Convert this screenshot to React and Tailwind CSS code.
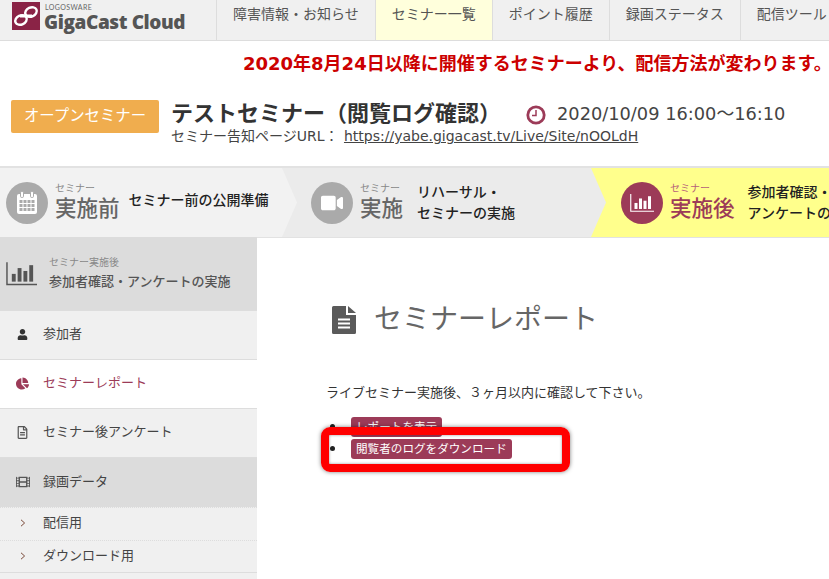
import React from "react";
import { FaUser, FaChartPie, FaRegFileAlt, FaFilm, FaVideo } from "react-icons/fa";

const font = { fontFamily: '"DejaVu Sans","Noto Sans CJK JP",sans-serif' };

function Bars({ color, size = 34 }) {
  return (
    <svg width={size} height={size * 0.8} viewBox="0 0 32 25" fill="none">
      <path d="M1 1V24H32" stroke={color} strokeWidth="1.5" />
      <rect x="6" y="13" width="4" height="8" fill={color} />
      <rect x="12" y="7" width="4" height="14" fill={color} />
      <rect x="18" y="10" width="4" height="11" fill={color} />
      <rect x="24" y="4" width="4" height="17" fill={color} />
    </svg>
  );
}

function Calendar() {
  return (
    <svg width="22" height="24" viewBox="0 0 22 24">
      <rect x="1" y="3" width="20" height="20" rx="2" fill="#fff" />
      <rect x="4.5" y="0.5" width="3" height="6" rx="1.2" fill="#fff" stroke="#aaa" strokeWidth="1" />
      <rect x="14.5" y="0.5" width="3" height="6" rx="1.2" fill="#fff" stroke="#aaa" strokeWidth="1" />
      {[9, 13, 17].map((y) =>
        [3.5, 7.5, 11.5, 15.5].map((x) => <rect key={x + "-" + y} x={x} y={y} width="3" height="3" fill="#aaa" />)
      )}
    </svg>
  );
}

function Logo() {
  return (
    <div className="flex items-start w-[216px] shrink-0 h-[40px] pl-[12px] pt-[2px]">
      <svg width="28" height="28" viewBox="0 0 28 28" className="shrink-0">
        <rect width="28" height="28" fill="#8a2346" />
        <ellipse cx="9" cy="18" rx="6" ry="4.5" transform="rotate(-25 9 18)" fill="none" stroke="#fff" strokeWidth="2.4" />
        <ellipse cx="19" cy="10" rx="6" ry="4.5" transform="rotate(-25 19 10)" fill="none" stroke="#fff" strokeWidth="2.4" />
        <path d="M8 14L20 14" stroke="#fff" strokeWidth="3" />
      </svg>
      <div className="ml-[4px] flex flex-col">
        <span className="text-[7px] leading-[8px] mt-[1px] ml-[1px] text-[#666] tracking-[0.4px]" style={{ fontFamily: '"Lato",sans-serif' }}>LOGOSWARE</span>
        <span className="text-[19px] leading-[22px] font-extrabold text-[#555] whitespace-nowrap tracking-[-0.4px]" style={{ fontFamily: '"Open Sans",sans-serif' }}>GigaCast Cloud</span>
      </div>
    </div>
  );
}

function NavItem({ children, active }) {
  return (
    <div className={"border-l border-[#ddd] px-[16px] h-full flex items-center pb-[11px] text-[14px] text-[#555] whitespace-nowrap shrink-0 " + (active ? "bg-[#ffffdc]" : "")}>
      {children}
    </div>
  );
}

function Step({ children, className }) {
  return <div className={"relative flex items-center h-full shrink-0 " + className}>{children}</div>;
}

function StepArrow({ color }) {
  return <div className={"absolute top-0 left-full z-10 w-[15px] h-full [clip-path:polygon(0_0,100%_50%,0_100%)] " + color} />;
}

function StepLabel({ big, color, sub }) {
  return (
    <div className="flex flex-col ml-[7px] shrink-0 mt-[-1px]">
      <span className={"text-[10px] leading-[10px] mb-[3px] " + sub}>セミナー</span>
      <span className={"text-[21.5px] leading-[24px] font-medium whitespace-nowrap " + color}>{big}</span>
    </div>
  );
}

function SideItem({ icon, children, className = "", h = "h-[49px]" }) {
  return (
    <div className={"flex items-center border-b border-[#ddd] text-[13px] pb-[2px] " + h + " " + className}>
      <div className="w-[43px] flex justify-center pl-[2px] shrink-0">{icon}</div>
      <span className="whitespace-nowrap">{children}</span>
    </div>
  );
}

export default function App() {
  return (
    <div className="w-[829px] h-[579px] overflow-hidden bg-white text-[#333]" style={font}>
      <header className="flex h-[41px] bg-[#f0f0f0] border-b border-[#ddd] overflow-hidden">
        <Logo />
        <NavItem>障害情報・お知らせ</NavItem>
        <NavItem active>セミナー一覧</NavItem>
        <NavItem>ポイント履歴</NavItem>
        <NavItem>録画ステータス</NavItem>
        <NavItem>配信ツール</NavItem>
      </header>

      <div className="h-[125px] relative">
        <div className="absolute left-[243px] top-[11px] text-[18px] leading-[24px] font-bold text-[#cc0000] whitespace-nowrap">
          2020年8月24日以降に開催するセミナーより、配信方法が変わります。
        </div>
        <div className="flex pt-[59px] pl-[11px]">
          <div className="w-[148px] h-[33px] bg-[#f0ad4e] rounded-[2px] text-white text-[15.4px] pt-[1px] flex items-center justify-center">オープンセミナー</div>
          <div className="ml-[12px] flex flex-col">
            <div className="flex items-center h-[26px] mt-[1px]">
              <span className="text-[22px] leading-[26px] font-bold whitespace-nowrap text-[#333] w-[355px] shrink-0">テストセミナー（閲覧ログ確認）</span>
              <svg width="20" height="20" viewBox="0 0 20 20" className="shrink-0 mt-[2px]">
                <circle cx="10" cy="10" r="8.2" fill="none" stroke="#9c3b58" strokeWidth="2.8" />
                <path d="M10 5V10.5H6" fill="none" stroke="#9c3b58" strokeWidth="1.5" />
              </svg>
              <span className="ml-[11px] text-[17.8px] whitespace-nowrap text-[#444] mt-[1px]">2020/10/09 16:00～16:10</span>
            </div>
            <div className="text-[14px] leading-[18px] whitespace-nowrap text-[#444]">
              セミナー告知ページURL： <span className="underline ml-[1px]">https://yabe.gigacast.tv/Live/Site/nOOLdH</span>
            </div>
          </div>
        </div>
      </div>

      <div className="flex h-[72px] border-t-2 border-b border-[#e2e2e2] overflow-hidden">
        <Step className="w-[282px] bg-[#f2f2f2] pl-[6px]">
          <StepArrow color="bg-[#f2f2f2]" />
          <div className="w-[42px] h-[42px] rounded-full bg-[#aaaaaa] flex items-center justify-center shrink-0"><Calendar /></div>
          <StepLabel big="実施前" color="text-[#666]" sub="text-[#888]" />
          <span className="ml-[9px] text-[14px] leading-[20px] font-medium text-[#222] whitespace-nowrap mb-[5px]">セミナー前の公開準備</span>
        </Step>
        <Step className="w-[309px] bg-[#ebebeb] pl-[29px]">
          <StepArrow color="bg-[#ebebeb]" />
          <div className="w-[42px] h-[42px] rounded-full bg-[#aaaaaa] flex items-center justify-center shrink-0"><FaVideo color="#fff" size={22} /></div>
          <StepLabel big="実施" color="text-[#666]" sub="text-[#888]" />
          <span className="ml-[14px] text-[14px] leading-[21px] font-medium text-[#222] whitespace-nowrap">リハーサル・<br />セミナーの実施</span>
        </Step>
        <Step className="flex-1 bg-[#ffff8c] pl-[30px]">
          <div className="w-[42px] h-[42px] rounded-full bg-[#9c3b58] flex items-center justify-center shrink-0"><Bars color="#fff" size={24} /></div>
          <StepLabel big="実施後" color="text-[#9c3b58]" sub="text-[#b5607a]" />
          <span className="ml-[13px] text-[14px] leading-[21px] font-medium text-[#222] whitespace-nowrap">参加者確認・<br />アンケートの実施</span>
        </Step>
      </div>

      <div className="flex">
        <aside className="w-[257px] shrink-0 h-[343px] mt-[-1px] bg-[#f0f0f0] text-[#444]">
          <div className="h-[74px] bg-[#dcdcdc] border-b border-[#ddd] flex items-center pl-[6px]">
            <Bars color="#555" size={31} />
            <div className="ml-[12px] flex flex-col pt-[3px]">
              <span className="text-[10px] leading-[14px] text-[#888]">セミナー実施後</span>
              <span className="text-[13px] leading-[24px] text-[#555] font-medium whitespace-nowrap">参加者確認・アンケートの実施</span>
            </div>
          </div>
          <SideItem icon={<FaUser size={11} color="#333" />}>参加者</SideItem>
          <SideItem className="bg-white text-[#9c3b58]" icon={<FaChartPie size={13} color="#9c3b58" />}>セミナーレポート</SideItem>
          <SideItem icon={<FaRegFileAlt size={13} color="#555" />}>セミナー後アンケート</SideItem>
          <SideItem className="bg-[#dcdcdc] border-b-0" icon={<FaFilm size={14} color="#555" />}>録画データ</SideItem>
          <SideItem h="h-[33px]" className="border-b-0 border-t border-t-[#ddd] [border-top-style:dotted]" icon={
            <svg width="6" height="8" viewBox="0 0 6 8"><path d="M1 .8L4.6 4L1 7.2" fill="none" stroke="#7a4a3a" strokeWidth="1" /></svg>
          }>配信用</SideItem>
          <SideItem h="h-[33px]" className="border-t border-t-[#ddd] [border-top-style:dotted]" icon={
            <svg width="6" height="8" viewBox="0 0 6 8"><path d="M1 .8L4.6 4L1 7.2" fill="none" stroke="#7a4a3a" strokeWidth="1" /></svg>
          }>ダウンロード用</SideItem>
        </aside>

        <main className="flex-1 relative pl-[69px] pt-[62px]">
          <div className="flex items-center h-[40px]">
            <svg width="24" height="28" viewBox="0 0 24 28" className="shrink-0 ml-[6px]">
              <path d="M0 1.5Q0 0 1.5 0H14V9H24V26.5Q24 28 22.5 28H1.5Q0 28 0 26.5Z" fill="#5a5a5a" />
              <path d="M16 0L24 7H16Z" fill="#5a5a5a" />
              <path d="M6 13.5H18M6 17.5H18M6 21.5H18" stroke="#fff" strokeWidth="2" />
            </svg>
            <span className="ml-[18px] text-[28px] leading-[40px] text-[#666] whitespace-nowrap">セミナーレポート</span>
          </div>
          <p className="mt-[43px] text-[13px] leading-[20px] text-[#333] whitespace-nowrap">ライブセミナー実施後、３ヶ月以内に確認して下さい。</p>
          <ul className="mt-[13px] text-[11.6px]">
            {["レポートを表示", "閲覧者のログをダウンロード"].map((t) => (
              <li key={t} className="flex items-center h-[21px] mb-[1px]">
                <span className="w-[5px] h-[5px] rounded-full bg-[#222] ml-[4px] shrink-0" />
                <span className="ml-[16px] h-[20px] leading-[20px] px-[5px] bg-[#9c3b58] text-white rounded-[3px] whitespace-nowrap">{t}</span>
              </li>
            ))}
          </ul>
          <div className="absolute left-[64px] top-[189px] w-[249px] h-[45px] border-[8px] border-[#ff0000] rounded-[9px] shadow-[0_0_4px_rgba(0,0,0,0.5),inset_0_0_3px_rgba(0,0,0,0.4)]" />
        </main>
      </div>
    </div>
  );
}
